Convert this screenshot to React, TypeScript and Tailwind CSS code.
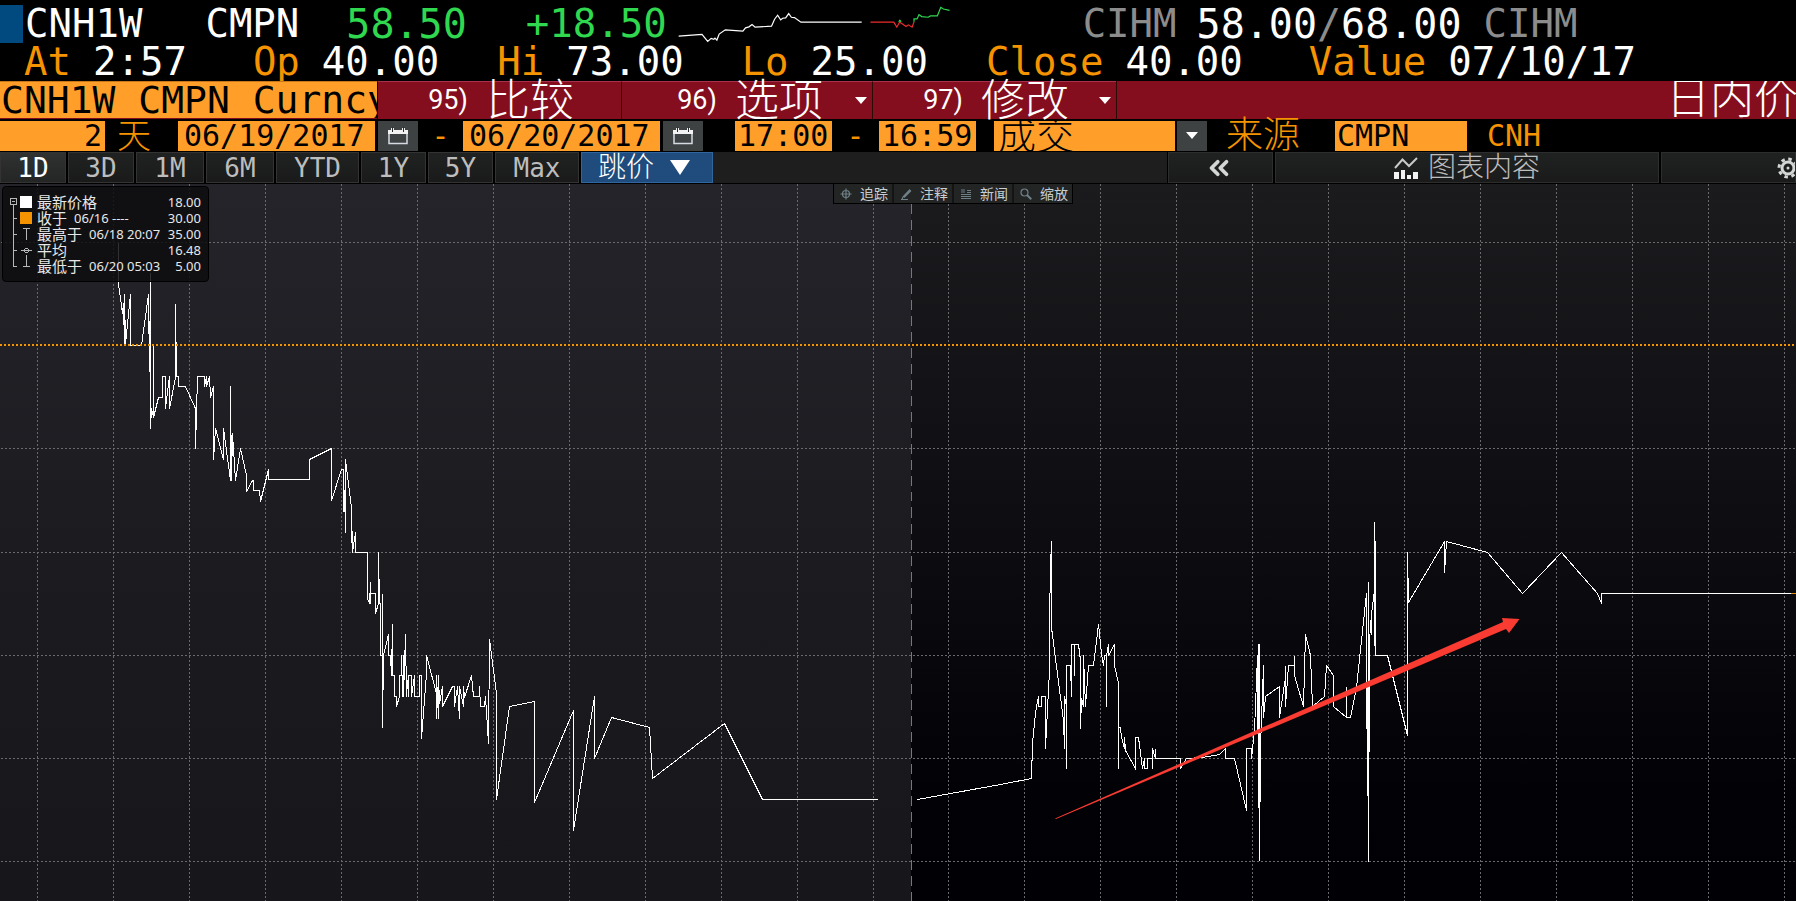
// src/App.tsx
import React, { useState } from 'react';
import { ChevronsLeft } from 'lucide-react';

const PRICE_DAY_ONE =
  '118,242 118,284 120,298 122,313 123,303 124,345 124,294 125,344 130,294 130,345 141,345 148,294 149,371 150,273 150,428 151,408 153,417 153,345 153,417 158,397 162,397 162,376 165,376 165,408 169,376 169,408 175,377 175,304 176,376 178,376 178,386 185,386 195,408 195,448 197,376 204,376 204,386 206,376 206,386 209,376 210,397 213,386 213,459 215,428 223,459 223,428 230,480 230,386 231,480 232,433 235,480 240,448 246,475 246,491 252,480 253,480 253,490 259,490 260,501 268,469 268,479 309,479 309,459 331,448 331,500 341,469 343,469 343,511 344,490 345,532 345,459 351,507 351,542 352,531 352,552 355,532 355,552 367,552 367,598 369,603 370,582 370,603 370,593 375,593 375,613 378,603 378,552 379,603 380,603 380,655 382,655 382,593 382,727 383,655 388,634 388,655 390,655 391,675 392,624 392,675 394,675 394,696 396,696 396,706 399,696 399,675 401,675 401,655 402,696 403,655 403,696 405,634 406,696 407,680 408,696 408,675 411,675 411,696 414,675 414,696 419,696 419,675 421,675 421,738 426,673 426,655 436,693 436,718 436,675 438,718 438,675 439,703 442,686 442,706 452,686 454,686 454,706 457,686 459,718 459,686 463,706 463,686 464,697 471,675 473,696 479,696 479,686 480,706 484,706 485,696 488,743 489,639 496,693 496,799 509,706 534,701 534,802 573,710 573,830 594,696 594,758 611,717 649,727 652,778 724,723 762,799 877,799';

const PRICE_DAY_TWO =
  '917,799 1000,784 1031,778 1032,743 1035,712 1038,696 1038,706 1041,706 1041,696 1045,696 1045,748 1049,670 1049,620 1050,567 1051,541 1051,627 1063,720 1064,748 1064,696 1066,706 1066,768 1066,665 1070,665 1071,696 1071,644 1074,644 1074,675 1074,644 1078,644 1080,660 1080,728 1081,698 1083,706 1083,655 1085,706 1088,665 1093,665 1098,624 1101,653 1103,665 1104,655 1106,655 1106,706 1106,655 1108,644 1108,655 1114,644 1114,665 1118,683 1118,768 1118,727 1120,727 1121,737 1124,748 1124,737 1125,750 1135,768 1135,737 1138,737 1142,768 1144,758 1144,768 1147,768 1147,758 1152,758 1152,768 1152,748 1155,758 1155,748 1155,758 1180,758 1180,768 1186,758 1202,757 1219,754 1225,748 1225,758 1234,758 1246,810 1246,748 1251,748 1251,758 1254,730 1257,655 1258,807 1258,644 1259,644 1259,860 1260,747 1263,665 1263,717 1265,696 1279,686 1279,717 1285,677 1285,665 1285,706 1288,665 1294,665 1294,655 1294,675 1303,706 1305,634 1310,655 1312,706 1324,696 1326,665 1333,675 1333,706 1346,717 1346,686 1346,717 1350,717 1356,687 1366,593 1366,660 1367,795 1368,582 1368,861 1369,647 1370,620 1371,634 1371,613 1374,590 1374,521 1374,645 1375,541 1375,655 1387,655 1407,735 1407,552 1408,602 1444,541 1444,572 1446,541 1487,552 1522,593 1561,552 1597,593 1601,603 1601,593 1790,593';

const GRID_X = Array.from({ length: 24 }, (_, i) => (i < 12 ? 37 + i * 76 : 948 + (i - 12) * 76));
const GRID_Y = [242, 448, 552, 655, 758, 861];

const RANGES = [
  { label: '1D', width: 'w-[66px]' },
  { label: '3D', width: 'w-[66px]' },
  { label: '1M', width: 'w-[68px]' },
  { label: '6M', width: 'w-[68px]' },
  { label: 'YTD', width: 'w-[83px]' },
  { label: '1Y', width: 'w-[65px]' },
  { label: '5Y', width: 'w-[65px]' },
  { label: 'Max', width: 'w-[84px]' },
];

const QUOTES = [
  { label: 'At', value: '2:57', margin: 'ml-6' },
  { label: 'Op', value: '40.00', margin: 'ml-[66px]' },
  { label: 'Hi', value: '73.00', margin: 'ml-[58px]' },
  { label: 'Lo', value: '25.00', margin: 'ml-[58px]' },
  { label: 'Close', value: '40.00', margin: 'ml-[58px]' },
  { label: 'Value', value: '07/10/17', margin: 'ml-[66px]' },
];

const TOOLS = [
  { label: '追踪', path: 'M6 0.500v11M0.500 6h11M6 2.500a3.500 3.500 0 1 0 0 7a3.500 3.500 0 1 0 0-7' },
  { label: '注释', path: 'M3 9L10 1.500M4 9.500L11 2.500M1 11.500h7M2 11L3 9' },
  { label: '新闻', path: 'M1 2h4M1 4h4M7 2.500h4M7 4.500h4M1 6.500h10M1 8.500h10M1 10.500h10' },
  { label: '缩放', path: 'M4.500 1a3.500 3.500 0 1 0 0 7a3.500 3.500 0 1 0 0-7M7 7.500L11 11.500M7.500 7L11.500 11' },
];

const Caret: React.FC = () => (
  <svg viewBox="0 0 12 7" className="h-[7px] w-3 shrink-0 fill-current" aria-hidden="true">
    <path d="M0 0h12L6 7z" />
  </svg>
);

const Sparkline: React.FC = () => (
  <svg viewBox="200 15 725 130" preserveAspectRatio="none" className="ml-[9px] h-[43px] w-[277px] shrink-0" fill="none" aria-hidden="true">
    <g strokeWidth="1.2">
      <polyline vectorEffect="non-scaling-stroke" stroke="#fff" points="207,109 268,104 283,125 292,116 299,119 302,115 307,121 313,103 329,90 375,94 382,84 391,81 399,74 407,82 450,79 458,58 466,46 474,60 479,55 487,54 495,41 502,52 510,53 527,67 686,67" />
      <polyline vectorEffect="non-scaling-stroke" stroke="#f02c2c" points="709,67 770,67 778,82 785,67 790,70 802,80 808,75 818,82 823,66" />
      <polyline vectorEffect="non-scaling-stroke" stroke="#2fd84f" points="783,66 786,61 789,66" />
      <polyline vectorEffect="non-scaling-stroke" stroke="#2fd84f" points="823,66 823,57 831,57 836,44 843,50 860,52 866,48 884,48 893,22 900,27 916,31" />
    </g>
  </svg>
);

const CalendarButton: React.FC<{ label: string }> = ({ label }) => (
  <button type="button" aria-label={label} className="flex h-[30px] w-10 shrink-0 items-center justify-center bg-[#3f4242]">
    <svg viewBox="0 0 20 18" className="h-[18px] w-5" aria-hidden="true">
      <path d="M0 3h3V1h3v2h8V1h3v2h3v4H0z" fill="#f2f2f2" />
      <path d="M1 7v9.500h18V7" fill="none" stroke="#d5dbe2" strokeWidth="1.5" />
      <path d="M4.500 0v5M15.500 0v5" stroke="#2b2d2d" strokeWidth="1" />
    </svg>
  </button>
);

const PriceChart: React.FC = () => (
  <svg viewBox="0 184 1796 717" preserveAspectRatio="none" className="block h-full min-h-[717px] w-full" role="img" aria-label="CNH1W">
    <defs>
      <linearGradient id="dayOne" x1="0" y1="0" x2="0" y2="1">
        <stop offset="0" stopColor="#25242a" />
        <stop offset="0.5" stopColor="#1c1b20" />
        <stop offset="1" stopColor="#17161a" />
      </linearGradient>
      <linearGradient id="dayTwo" x1="0" y1="0" x2="0" y2="1">
        <stop offset="0" stopColor="#1b1b1e" />
        <stop offset="0.5" stopColor="#0d0d11" />
        <stop offset="0.85" stopColor="#020206" />
        <stop offset="1" stopColor="#000005" />
      </linearGradient>
    </defs>
    <rect x="0" y="184" width="911" height="717" fill="url(#dayOne)" />
    <rect x="911" y="184" width="885" height="717" fill="url(#dayTwo)" />
    <g transform="translate(0.5 0.5)" fill="none" shapeRendering="crispEdges">
      <g stroke="#6a6a6c" strokeDasharray="2 2">
        {GRID_X.map((x) => (
          <line key={x} x1={x} x2={x} y1="183" y2="901" />
        ))}
        {GRID_Y.map((y) => (
          <line key={y} x1="0" x2="1796" y1={y} y2={y} />
        ))}
      </g>
      <line x1="911" x2="911" y1="187" y2="901" stroke="#77777a" strokeDasharray="10 6" />
      <polyline points={PRICE_DAY_ONE} stroke="#fff" />
      <polyline points={PRICE_DAY_TWO} stroke="#fff" />
      <line x1="1790" x2="1796" y1="593" y2="593" stroke="#e08a10" />
    </g>
    <line x1="0" x2="1796" y1="345" y2="345" stroke="#f59300" strokeWidth="2" strokeDasharray="2 2" shapeRendering="crispEdges" />
    <path d="M1055 818.500L1503 622L1502 618L1519.500 619L1509 633L1506 629L1056 819z" fill="#f93b32" />
  </svg>
);

const LEGEND = [
  { text: '最新价格', value: '18.00' },
  { text: '收于', stamp: '06/16 ----', value: '30.00' },
  { text: '最高于', stamp: '06/18 20:07', value: '35.00' },
  { text: '平均', value: '16.48' },
  { text: '最低于', stamp: '06/20 05:03', value: '5.00' },
];

const Legend: React.FC = () => (
  <div className="absolute top-[2px] left-[2px] flex h-[96px] w-[207px] rounded border border-black bg-[#0d0d0f]/85 pt-[7px] pr-[7px] pl-[7px] text-[#e8e8e8]">
    <svg viewBox="0 0 24 80" className="h-20 w-6 shrink-0" fill="none" aria-hidden="true" shapeRendering="crispEdges">
      <g stroke="#b5b8b8">
        <path d="M0.500 4.500h6v6h-6zM2 7.500h3M3.500 11v61.500H7M3.500 24.500H7M3.500 40.500H7M3.500 56.500H7" />
        <path d="M13 34.500h7M16.500 34.500v11M11 56.500h11M13 72.500h7M16.500 61v11" />
      </g>
      <circle cx="16.500" cy="56.500" r="2" stroke="#b5b8b8" />
      <path d="M10 2h12v12H10z" fill="#fff" />
      <path d="M10 18h12v12H10z" fill="#f59300" />
    </svg>
    <ul className="ml-[3px] grow text-[13px] leading-4">
      {LEGEND.map((row) => (
        <li key={row.text} className="flex h-4 items-center whitespace-nowrap">
          <span className="text-[15px]">{row.text}</span>
          {row.stamp && <span className="ml-[7px]">{row.stamp}</span>}
          <span className="ml-auto">{row.value}</span>
        </li>
      ))}
    </ul>
  </div>
);

const App: React.FC = () => {
  const [range, setRange] = useState('1D');

  return (
    <div className="flex min-h-screen w-full flex-col overflow-hidden bg-black font-['DejaVu_Sans_Mono','Noto_Sans_CJK_SC',monospace] whitespace-nowrap text-white">
      {/* Quote header */}
      <header className="h-[81px] pt-[5px] text-[39px] leading-[38px]">
        <div className="flex h-[38px]">
          <span className="h-[38px] w-[23px] shrink-0 bg-[#004a7f]" />
          <h1 className="ml-[2px]">CNH1W</h1>
          <span className="ml-[63px]">CMPN</span>
          <span className="ml-[47px] text-[40px] text-[#2fd84f]">58.50</span>
          <span className="ml-[59px] text-[#2fd84f]">+18.50</span>
          <Sparkline />
          <span className="ml-[130px] text-[#8c8c8c]">CIHM</span>
          <span className="ml-5 text-[40px]">
            58.00<span className="text-[#8c8c8c]">/</span>68.00
          </span>
          <span className="ml-[22px] text-[#8c8c8c]">CIHM</span>
        </div>
        <dl className="flex h-[38px]">
          {QUOTES.map((quote) => (
            <div key={quote.label} className={`flex shrink-0 gap-[22px] ${quote.margin}`}>
              <dt className="text-[#f59300]">{quote.label}</dt>
              <dd>{quote.value}</dd>
            </div>
          ))}
        </dl>
      </header>

      {/* Security and function menu */}
      <div className="flex h-[38px] bg-[#850e1e]">
        <input
          aria-label="Security"
          defaultValue="CNH1W CMPN Curncy"
          className="h-[37px] w-[377px] shrink-0 border-t border-[#c8761a] bg-[#ff9f2a] pl-[1px] text-[38px] leading-9 text-black outline-none"
        />
        <button type="button" className="flex w-[244px] shrink-0 items-center border-t border-l border-[#a8304a] border-l-black pl-[50px]">
          <span className="w-10 font-['Roboto',sans-serif] text-[27px]">95)</span>
          <span className="ml-[18px] text-[44px] leading-9 font-light">比较</span>
        </button>
        <button type="button" className="flex w-[251px] shrink-0 items-center border-t border-l border-[#a8304a] border-l-[#2c0a06] pr-[5px] pl-[55px]">
          <span className="w-10 font-['Roboto',sans-serif] text-[27px]">96)</span>
          <span className="mr-auto ml-[18px] text-[44px] leading-9 font-light">选项</span>
          <Caret />
        </button>
        <button type="button" className="flex w-[244px] shrink-0 items-center border-t border-l border-[#a8304a] border-l-[#2c0a06] pr-[5px] pl-[50px]">
          <span className="w-10 font-['Roboto',sans-serif] text-[27px]">97)</span>
          <span className="mr-auto ml-[18px] text-[44px] leading-9 font-light">修改</span>
          <Caret />
        </button>
        <div className="flex min-w-0 grow justify-end overflow-hidden border-l border-[#2c0a06]">
          <h2 className="w-[130px] shrink-0 text-[44px] leading-9 font-light">日内价</h2>
        </div>
      </div>

      {/* Date, time and source fields */}
      <div className="flex h-[33px] items-center text-[30px] leading-[30px] text-[#f59300]">
        <input id="days" defaultValue="2" className="h-[30px] w-[105px] shrink-0 bg-[#ff9f2a] pr-[3px] text-right text-black outline-none" />
        <label htmlFor="days" className="ml-3 w-[61px] text-[34px] font-light">天</label>
        <input aria-label="Start date" defaultValue="06/19/2017" className="mr-[3px] h-[30px] w-[197px] shrink-0 bg-[#ff9f2a] pl-[6px] text-black outline-none" />
        <CalendarButton label="Pick start date" />
        <span className="w-[45px] text-center">-</span>
        <input aria-label="End date" defaultValue="06/20/2017" className="mr-[3px] h-[30px] w-[197px] shrink-0 bg-[#ff9f2a] pl-[6px] text-black outline-none" />
        <CalendarButton label="Pick end date" />
        <input aria-label="Start time" defaultValue="17:00" className="ml-8 h-[30px] w-[97px] shrink-0 bg-[#ff9f2a] pl-[3px] text-black outline-none" />
        <span className="w-[47px] text-center">-</span>
        <input aria-label="End time" defaultValue="16:59" className="h-[30px] w-[97px] shrink-0 bg-[#ff9f2a] pl-[3px] text-black outline-none" />
        <div className="relative ml-[18px] flex h-[30px] w-[213px] shrink-0">
          <select aria-label="Event" className="h-[30px] w-[181px] appearance-none bg-[#ff9f2a] pl-1 text-[38px] leading-[30px] font-light text-black outline-none">
            <option>成交</option>
          </select>
          <span className="pointer-events-none ml-[2px] flex w-[30px] items-center justify-center bg-[#3f4242] text-white">
            <Caret />
          </span>
        </div>
        <label htmlFor="source" className="ml-[19px] w-[109px] text-[37px] font-light">来源</label>
        <input id="source" defaultValue="CMPN" className="h-[30px] w-[132px] shrink-0 bg-[#ff9f2a] pl-[2px] text-black outline-none" />
        <span className="ml-5">CNH</span>
      </div>

      {/* Range tabs */}
      <nav className="flex h-8 gap-[2px] border-b border-black bg-[#1e1e1e] text-[26px] leading-[30px] text-[#bdbdbd]">
        <div className="flex gap-[2px] bg-black">
          {RANGES.map(({ label, width }) => (
            <button
              key={label}
              type="button"
              onClick={() => setRange(label)}
              className={`${range === label ? 'from-[#303232] to-[#242626] text-white' : 'from-[#202222] to-[#1a1a1a]'} ${width} h-[31px] border border-[#333] bg-linear-to-b`}
            >
              {label}
            </button>
          ))}
          <button type="button" className="flex h-[31px] w-[132px] items-center gap-4 border border-[#2f66a0] bg-[#1f4b7d] pl-4 text-white">
            <span className="text-[28px] font-light">跳价</span>
            <svg viewBox="0 0 20 15" className="h-[15px] w-5 fill-current" aria-hidden="true">
              <path d="M0 0h20L10 15z" />
            </svg>
          </button>
        </div>
        <div className="ml-auto flex w-[629px] gap-[2px] border-l border-black bg-black">
          <button type="button" aria-label="Collapse" className="flex h-[31px] w-[105px] items-center justify-center border border-[#2c2e2e] bg-linear-to-b from-[#202222] to-[#1a1a1a] pr-1 text-[#d4d6d6]">
            <ChevronsLeft size={30} strokeWidth={3} />
          </button>
          <button type="button" className="flex h-[31px] w-[384px] items-center justify-center gap-[10px] border border-[#2c2e2e] bg-linear-to-b from-[#202222] to-[#1a1a1a]">
            <svg viewBox="0 0 24 22" className="h-[22px] w-6" aria-hidden="true">
              <path d="M1 11L8.500 2.500L15 9L23 1" fill="none" stroke="#c8caca" strokeWidth="2" />
              <path d="M0 15h5v7H0zM7 13h4v9H7zM13 18h4v4h-4zM19 15h5v7h-5z" fill="#f2f2f2" />
            </svg>
            <span className="text-[28px] font-light">图表内容</span>
          </button>
          <button type="button" aria-label="Settings" className="flex h-[31px] min-w-0 grow items-center justify-end overflow-hidden border border-[#2c2e2e] bg-linear-to-b from-[#202222] to-[#1a1a1a] text-[#d4d6d6]">
            <svg viewBox="0 0 22 22" className="-mr-1 h-[22px] w-[22px] shrink-0" fill="none" stroke="currentColor" aria-hidden="true">
              <circle cx="11" cy="11" r="6" strokeWidth="3" />
              <circle cx="11" cy="11" r="1.500" fill="currentColor" stroke="none" />
              <circle cx="11" cy="11" r="9" strokeWidth="3" strokeDasharray="3.500 3.570" />
            </svg>
          </button>
        </div>
      </nav>

      {/* Chart */}
      <main className="relative grow font-['Noto_Sans','Noto_Sans_CJK_SC',sans-serif]">
        <PriceChart />
        <Legend />
        <div className="absolute -top-px left-[833px] flex h-[21px] gap-[2px] border border-black bg-[#141415] text-[14px] leading-[19px] text-[#c9ced2]">
          {TOOLS.map(({ label, path }) => (
            <button key={label} type="button" className="flex w-[58px] items-center justify-between bg-[#232525] pr-1 pl-[6px]">
              <svg viewBox="0 0 12 12" className="h-3 w-3" fill="none" stroke="#6f8087" strokeWidth="1.2" aria-hidden="true">
                <path d={path} />
              </svg>
              {label}
            </button>
          ))}
        </div>
      </main>
    </div>
  );
};

export default App;
